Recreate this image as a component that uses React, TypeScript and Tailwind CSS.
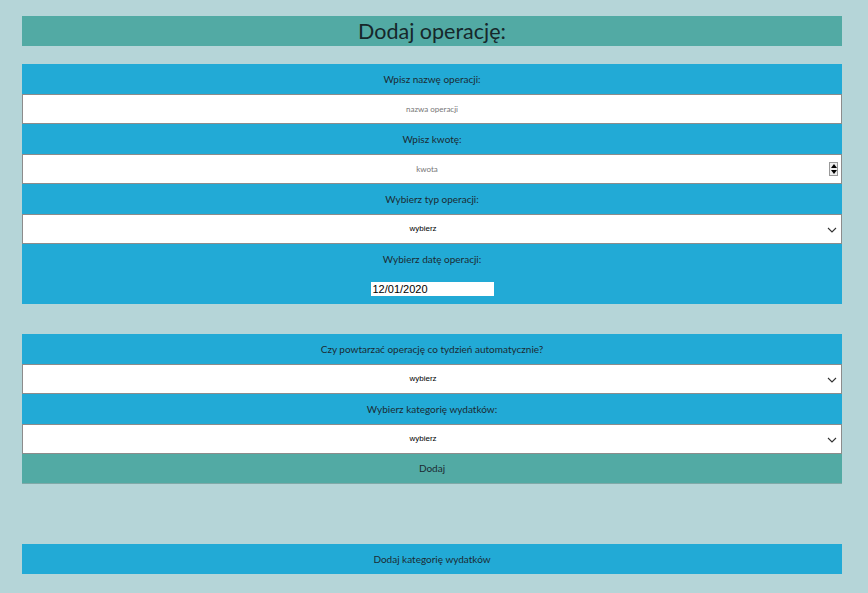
import { useState } from "react"

const FONT = { fontFamily: "Lato, 'Noto Sans', sans-serif" }

function Label({ children }: { children: React.ReactNode }) {
  return (
    <div className="h-[30px] flex items-center justify-center text-[10px] text-[#1c2b33]" style={FONT}>
      {children}
    </div>
  )
}

function Chevron() {
  return (
    <svg className="absolute right-[4px] top-[10px]" width="10" height="10" viewBox="0 0 10 10">
      <path d="M1 3 L5 7 L9 3" fill="none" stroke="#333" strokeWidth="1.1" />
    </svg>
  )
}

function SelectBox() {
  return (
    <div className="relative h-[30px] bg-white border border-[#8c8c8c] flex items-center justify-center pr-[18px]">
      <span className="text-[8px] text-black" style={{ fontFamily: "'Liberation Sans', Arial, sans-serif" }}>
        wybierz
      </span>
      <Chevron />
    </div>
  )
}

function TextBox({ placeholder, spinner }: { placeholder: string; spinner?: boolean }) {
  const [val, setVal] = useState("")
  return (
    <div className="relative h-[30px] bg-white border border-[#8c8c8c]">
      <input
        value={val}
        onChange={e => setVal(e.target.value)}
        placeholder={placeholder}
        className={`block w-full h-[28px] text-center text-[8px] outline-none placeholder:text-[#777] bg-white ${spinner ? "pr-[10px]" : ""}`}
        style={FONT}
      />
      {spinner && (
        <div className="absolute right-[3px] top-[7px] w-[9px] h-[14px] border border-[#999] bg-[#eee] flex flex-col items-center justify-around">
          <div className="w-0 h-0 border-l-[3px] border-r-[3px] border-b-[4px] border-l-transparent border-r-transparent border-b-black" />
          <div className="w-0 h-0 border-l-[3px] border-r-[3px] border-t-[4px] border-l-transparent border-r-transparent border-t-black" />
        </div>
      )}
    </div>
  )
}

export default function App() {
  return (
    <div className="min-h-[593px] bg-[#b5d5d8] px-[22px] pt-[16px] pb-[19px] w-[868px]">
      <div className="w-[820px]">
        <h1
          className="h-[30px] bg-[#52aaa4] flex items-center justify-center text-[21.5px] text-[#16272b]"
          style={FONT}
        >
          Dodaj operację:
        </h1>

        <div className="mt-[18px] bg-[#22aad6]">
          <Label>Wpisz nazwę operacji:</Label>
          <TextBox placeholder="nazwa operacji" />
          <Label>Wpisz kwotę:</Label>
          <TextBox placeholder="kwota" spinner />
          <Label>Wybierz typ operacji:</Label>
          <SelectBox />
          <Label>Wybierz datę operacji:</Label>
          <div className="h-[30px] flex justify-center pt-[8px]">
            <div
              className="w-[123px] h-[14px] bg-white text-[11px] leading-[14px] pl-[2px] text-black"
              style={{ fontFamily: "'Liberation Sans', Arial, sans-serif" }}
            >
              12/01/2020
            </div>
          </div>
        </div>

        <div className="mt-[30px] bg-[#22aad6]">
          <Label>Czy powtarzać operację co tydzień automatycznie?</Label>
          <SelectBox />
          <Label>Wybierz kategorię wydatków:</Label>
          <SelectBox />
          <button
            className="w-full h-[30px] bg-[#52aaa4] border-b border-[#7fa9a8] flex items-center justify-center text-[10px] text-[#1c2b33]"
            style={FONT}
          >
            Dodaj
          </button>
        </div>

        <button
          className="mt-[60px] w-full h-[30px] bg-[#22aad6] flex items-center justify-center text-[10px] text-[#1c2b33]"
          style={FONT}
        >
          Dodaj kategorię wydatków
        </button>
      </div>
    </div>
  )
}
